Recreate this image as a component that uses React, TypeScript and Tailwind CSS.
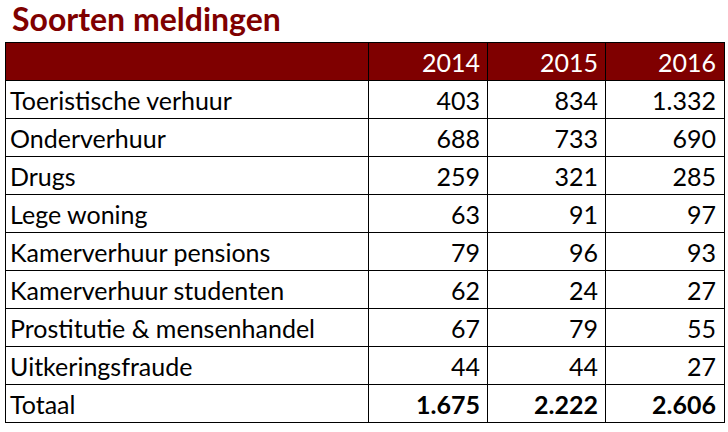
import React from "react";

const rows: [string, string, string, string][] = [
  ["Toeristische verhuur", "403", "834", "1.332"],
  ["Onderverhuur", "688", "733", "690"],
  ["Drugs", "259", "321", "285"],
  ["Lege woning", "63", "91", "97"],
  ["Kamerverhuur pensions", "79", "96", "93"],
  ["Kamerverhuur studenten", "62", "24", "27"],
  ["Prostitutie & mensenhandel", "67", "79", "55"],
  ["Uitkeringsfraude", "44", "44", "27"],
];

const cell = "border border-black py-0 leading-[34px]";

export default function App() {
  return (
    <div
      className="w-[728px] h-[432px] bg-white overflow-hidden"
      style={{ fontFamily: "Lato, 'Open Sans', sans-serif" }}
    >
      <div className="h-[42px] pl-[12px] pt-[1px] text-[32px] font-bold leading-[36px] text-[#7f0000]">
        Soorten meldingen
      </div>
      <table className="ml-[5px] w-[719px] table-fixed border-collapse text-[25px] text-black">
        <colgroup>
          <col className="w-[363px]" />
          <col className="w-[119px]" />
          <col className="w-[118px]" />
          <col className="w-[119px]" />
        </colgroup>
        <thead>
          <tr className="h-[38px] bg-[#7f0000] text-white">
            <th className={`${cell} px-0`}></th>
            <th className={`${cell} pl-0 pr-[7px] text-right font-normal`}>2014</th>
            <th className={`${cell} pl-0 pr-[7px] text-right font-normal`}>2015</th>
            <th className={`${cell} pl-0 pr-[8px] text-right font-normal`}>2016</th>
          </tr>
        </thead>
        <tbody>
          {rows.map((r) => (
            <tr key={r[0]} className="h-[38px]">
              <td className={`${cell} pl-[4px] pr-0`}>{r[0]}</td>
              <td className={`${cell} pl-0 pr-[7px] text-right`}>{r[1]}</td>
              <td className={`${cell} pl-0 pr-[7px] text-right`}>{r[2]}</td>
              <td className={`${cell} pl-0 pr-[8px] text-right`}>{r[3]}</td>
            </tr>
          ))}
          <tr className="h-[38px]">
            <td className={`${cell} pl-[4px] pr-0`}>Totaal</td>
            <td className={`${cell} pl-0 pr-[7px] text-right font-bold`}>1.675</td>
            <td className={`${cell} pl-0 pr-[7px] text-right font-bold`}>2.222</td>
            <td className={`${cell} pl-0 pr-[8px] text-right font-bold`}>2.606</td>
          </tr>
        </tbody>
      </table>
    </div>
  );
}
